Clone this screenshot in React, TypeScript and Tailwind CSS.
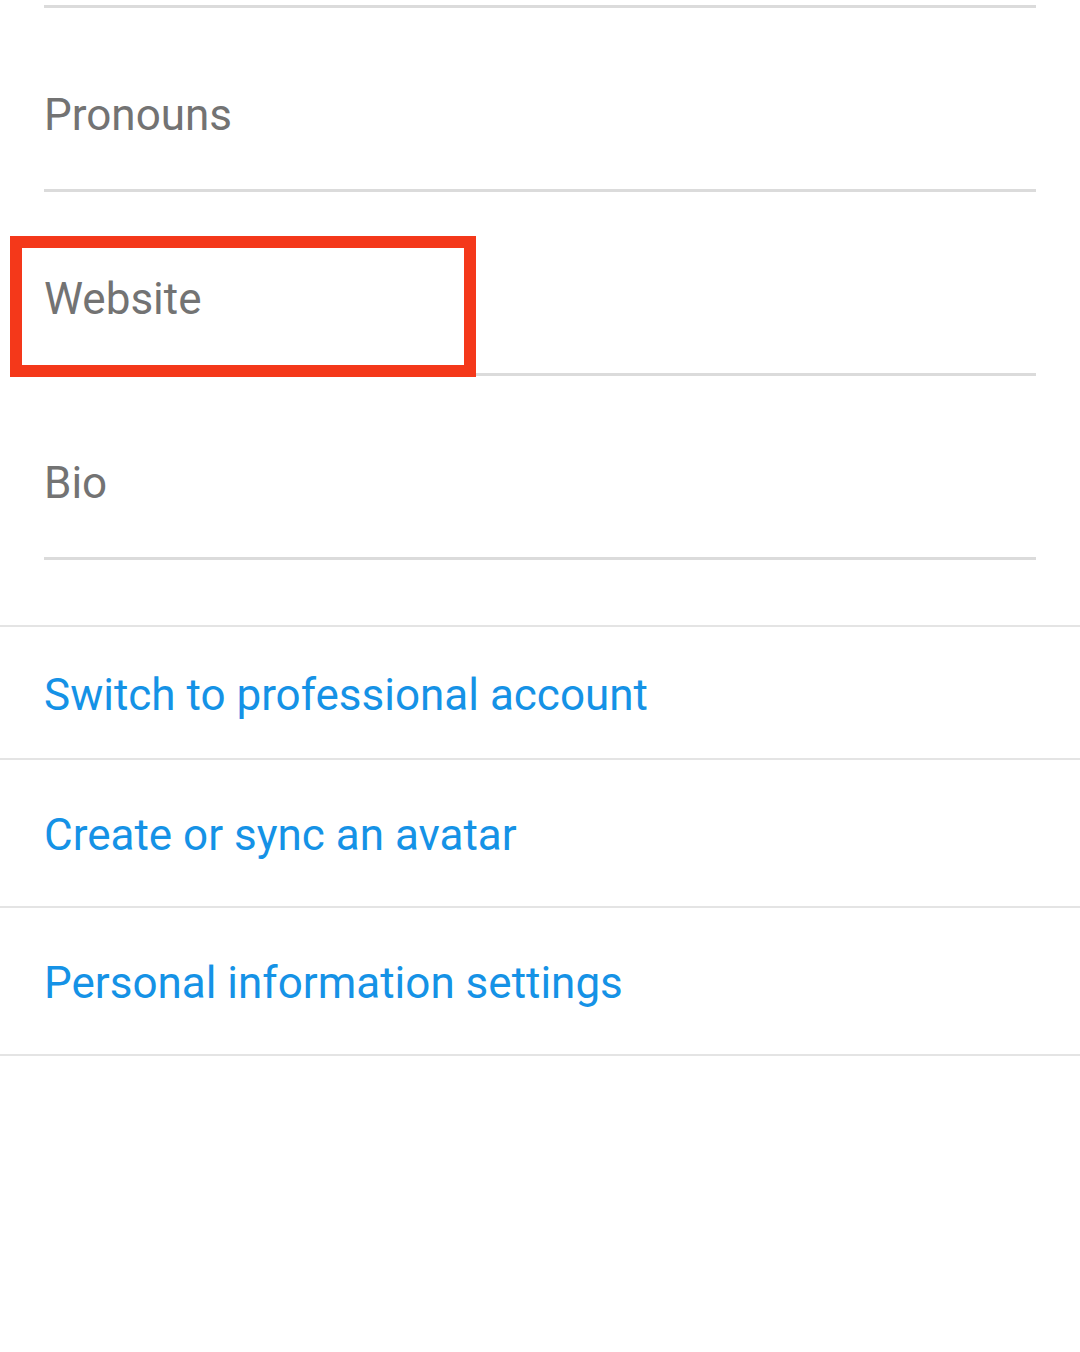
import React from "react";

const font = { fontFamily: "Roboto, 'Noto Sans', sans-serif" };

function Field({ label }: { label: string }) {
  return (
    <div className="h-[184px] border-b-[3px] border-[#dbdbdb] pt-[85px]">
      <div className="text-[44px] leading-[44px] text-[#737373]">{label}</div>
    </div>
  );
}

function LinkRow({ label, h, pt }: { label: string; h: string; pt: string }) {
  return (
    <div className={`${h} ${pt} border-b-2 border-[#e4e4e4] px-[44px]`}>
      <div className="text-[44px] leading-[44px] text-[#1592e6]">{label}</div>
    </div>
  );
}

export default function App() {
  return (
    <div className="relative w-[1080px] h-[1352px] bg-white overflow-hidden" style={font}>
      <div className="pt-[5px] px-[44px]">
        <div className="border-t-[3px] border-[#dbdbdb]" />
        <Field label="Pronouns" />
        <Field label="Website" />
        <Field label="Bio" />
      </div>
      <div className="mt-[65px] border-t-2 border-[#e4e4e4]">
        <LinkRow label="Switch to professional account" h="h-[133px]" pt="pt-[46px]" />
        <LinkRow label="Create or sync an avatar" h="h-[148px]" pt="pt-[53px]" />
        <LinkRow label="Personal information settings" h="h-[148px]" pt="pt-[53px]" />
      </div>
      <div className="absolute left-[10px] top-[236px] w-[466px] h-[141px] border-[12px] border-[#f4381a]" />
    </div>
  );
}
